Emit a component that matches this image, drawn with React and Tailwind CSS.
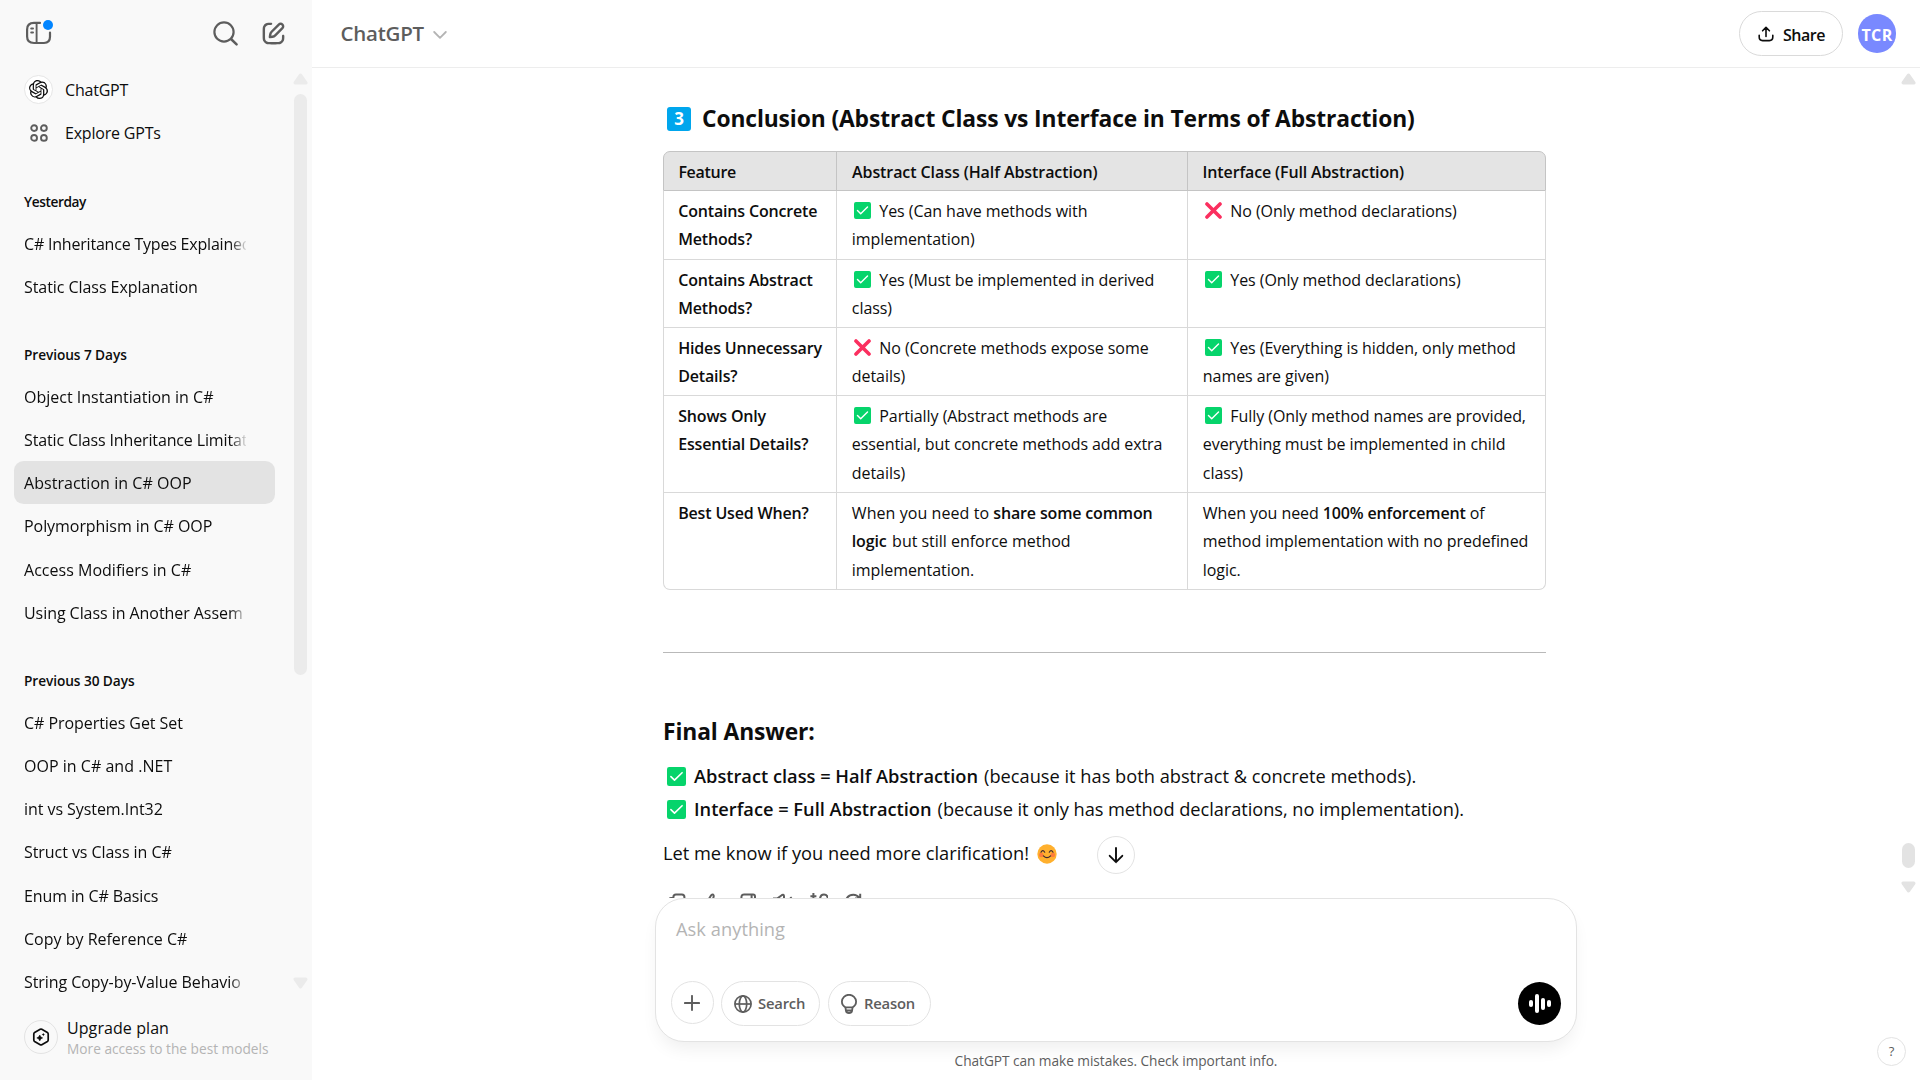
import React from "react";
import { SiOpenai } from "react-icons/si";

function Check({ className }) {
  return (
    <svg viewBox="0 0 19 19" className={className}>
      <rect width="19" height="19" rx="2.2" fill="#06d46b" />
      <path d="M3.9 9.6 7.5 13.1 15.1 5.7" fill="none" stroke="#fff" strokeWidth="1.6" strokeLinecap="round" strokeLinejoin="round" />
    </svg>
  );
}

function Cross({ className }) {
  return (
    <svg viewBox="0 0 19 19" className={className}>
      <path d="M2.2 2.2 16.8 16.8M16.8 2.2 2.2 16.8" fill="none" stroke="#fb2f5f" strokeWidth="4" strokeLinecap="round" />
    </svg>
  );
}

function Smile() {
  return (
    <svg viewBox="0 0 20 20" className="ml-[8px] h-5 w-5">
      <circle cx="10" cy="10" r="9.7" fill="#ffb02e" />
      <circle cx="4.2" cy="11" r="2.3" fill="#ff6f3d" opacity=".8" />
      <circle cx="15.8" cy="11" r="2.3" fill="#ff6f3d" opacity=".8" />
      <path d="M4 8.2Q5.8 5 7.7 8.2M12.3 8.2Q14.1 5 16 8.2M6.4 11.8Q10 15.4 13.6 11.8" fill="none" stroke="#402a32" strokeWidth="1.2" strokeLinecap="round" />
    </svg>
  );
}

function PanelIcon() {
  return (
    <div className="relative h-[29px] w-[29px]">
      <svg viewBox="0 0 29 29" className="h-[29px] w-[29px]" fill="none" stroke="#5d5d5d" strokeWidth="2.2" strokeLinecap="round">
        <path d="M16 3.9H10C5.5 3.9 3.1 5.8 3.1 10.5V17.5C3.1 22.2 5.5 24 10 24H20C24.2 24 26 22.2 26 17.8V13.5" />
        <path d="M12.6 4V24" strokeWidth="1.9" strokeLinecap="butt" />
        <path d="M7.2 9.4H9M7.2 13.6H9" strokeWidth="2" />
      </svg>
      <span className="absolute top-[1px] left-[19px] h-[10px] w-[10px] rounded-full bg-[#0285ff]" />
    </div>
  );
}

function SearchIcon() {
  return (
    <svg viewBox="0 0 29 29" className="h-[29px] w-[29px]" fill="none" stroke="#5d5d5d" strokeWidth="2.2" strokeLinecap="round">
      <circle cx="13" cy="13" r="9.6" />
      <path d="M20 20 25.6 25.4" strokeWidth="2.5" />
    </svg>
  );
}

function EditIcon() {
  return (
    <svg viewBox="0 0 24 24" className="h-[29px] w-[29px]" fill="#5d5d5d">
      <path d="M15.6729 3.91287C16.8918 2.69392 18.8682 2.69392 20.0871 3.91287C21.3061 5.13182 21.3061 7.10813 20.0871 8.32708L14.1499 14.2643C13.3849 15.0293 12.3925 15.5255 11.3215 15.6785L9.14142 15.9899C8.82983 16.0344 8.51546 15.9297 8.29289 15.7071C8.07033 15.4845 7.96554 15.1701 8.01005 14.8586L8.32149 12.6785C8.47449 11.6075 8.97072 10.615 9.7357 9.85006L15.6729 3.91287ZM18.6729 5.32708C18.235 4.88918 17.525 4.88918 17.0871 5.32708L11.1499 11.2643C10.6909 11.7233 10.3932 12.3187 10.3014 12.9613L10.1785 13.8215L11.0386 13.6986C11.6812 13.6068 12.2767 13.3091 12.7357 12.8501L18.6729 6.91287C19.1108 6.47497 19.1108 5.76499 18.6729 5.32708ZM11 3.99929C11.0004 4.55157 10.5531 4.99963 10.0008 5.00007C9.00227 5.00084 8.29769 5.00827 7.74651 5.06064C7.20685 5.11191 6.88488 5.20117 6.63803 5.32695C6.07354 5.61457 5.6146 6.07351 5.32698 6.63799C5.19279 6.90135 5.10062 7.24904 5.05118 7.8542C5.00078 8.47105 5 9.26336 5 10.4V13.6C5 14.7366 5.00078 15.5289 5.05118 16.1457C5.10062 16.7509 5.19279 17.0986 5.32698 17.3619C5.6146 17.9264 6.07354 18.3854 6.63803 18.673C6.90138 18.8072 7.24907 18.8993 7.85424 18.9488C8.47108 18.9992 9.26339 19 10.4 19H13.6C14.7366 19 15.5289 18.9992 16.1458 18.9488C16.7509 18.8993 17.0986 18.8072 17.362 18.673C17.9265 18.3854 18.3854 17.9264 18.673 17.3619C18.7988 17.1151 18.8881 16.7931 18.9393 16.2535C18.9917 15.7023 18.9991 14.9977 18.9999 13.9992C19.0003 13.4469 19.4484 12.9995 20.0007 13C20.553 13.0004 21.0003 13.4485 20.9999 14.0007C20.9991 14.9789 20.9932 15.7808 20.9304 16.4426C20.8664 17.116 20.7385 17.7136 20.455 18.2699C19.9757 19.2107 19.2108 19.9756 18.27 20.455C17.6777 20.7568 17.0375 20.8826 16.3086 20.9421C15.6008 21 14.7266 21 13.6428 21H10.3572C9.27339 21 8.39925 21 7.69138 20.9421C6.96253 20.8826 6.32234 20.7568 5.73005 20.455C4.78924 19.9756 4.02433 19.2107 3.54497 18.2699C3.24318 17.6776 3.11737 17.0374 3.05782 16.3086C2.99998 15.6007 2.99999 14.7266 3 13.6428V10.3572C2.99999 9.27337 2.99998 8.39922 3.05782 7.69134C3.11737 6.96249 3.24318 6.3223 3.54497 5.73001C4.02433 4.7892 4.78924 4.0243 5.73005 3.54493C6.28633 3.26149 6.88399 3.13358 7.55735 3.06961C8.21919 3.00673 9.02103 3.00083 9.99922 3.00007C10.5515 2.99964 10.9996 3.447 11 3.99929Z" />
    </svg>
  );
}

function GridIcon() {
  return (
    <svg viewBox="0 0 18 18" className="h-[18px] w-[18px]" fill="none" stroke="#5d5d5d" strokeWidth="1.9">
      <circle cx="4.1" cy="4.1" r="2.9" />
      <circle cx="13.9" cy="4.1" r="2.9" />
      <circle cx="4.1" cy="13.9" r="2.9" />
      <circle cx="13.9" cy="13.9" r="2.9" />
    </svg>
  );
}

function UpgradeIcon() {
  return (
    <svg viewBox="0 0 18 18" className="h-[18px] w-[18px]">
      <path d="M8.2 1.3Q9 .9 9.8 1.3L15.4 4.5Q16.2 5 16.2 5.9V12.1Q16.2 13 15.4 13.5L9.8 16.7Q9 17.1 8.2 16.7L2.6 13.5Q1.8 13 1.8 12.1V5.9Q1.8 5 2.6 4.5Z" fill="none" stroke="#0d0d0d" strokeWidth="1.7" />
      <path d="M7.8 7Q8.3 9.3 10.7 9.9Q8.3 10.5 7.8 12.9Q7.2 10.5 4.8 9.9Q7.2 9.3 7.8 7Z" fill="#0d0d0d" stroke="#0d0d0d" strokeWidth=".5" />
      <path d="M11.3 4.9Q11.6 6.3 13 6.6Q11.6 6.9 11.3 8.3Q11 6.9 9.6 6.6Q11 6.3 11.3 4.9Z" fill="#0d0d0d" />
    </svg>
  );
}

function Triangle({ down }) {
  return (
    <svg viewBox="0 0 15 12" className={down ? "h-3 w-[15px] rotate-180" : "h-3 w-[15px]"}>
      <path d="M7.5 2.2 12.8 9.8H2.2Z" fill="currentColor" stroke="currentColor" strokeWidth="3.4" strokeLinejoin="round" />
    </svg>
  );
}

const yesterday = [
  { t: "C# Inheritance Types Explained", ls: "tracking-[-0.2px]" },
  { t: "Static Class Explanation" },
];
const week = [
  { t: "Object Instantiation in C#", ls: "tracking-[0px]" },
  { t: "Static Class Inheritance Limitat", ls: "tracking-[-0.14px]" },
  { t: "Abstraction in C# OOP", active: true, ls: "tracking-[0.04px]" },
  { t: "Polymorphism in C# OOP" },
  { t: "Access Modifiers in C#", ls: "tracking-[0.02px]" },
  { t: "Using Class in Another Assem" },
];
const month = [
  { t: "C# Properties Get Set" },
  { t: "OOP in C# and .NET", ls: "tracking-[0.02px]" },
  { t: "int vs System.Int32" },
  { t: "Struct vs Class in C#" },
  { t: "Enum in C# Basics", ls: "tracking-[-0.11px]" },
  { t: "Copy by Reference C#", ls: "tracking-[0px]" },
  { t: "String Copy-by-Value Behavio" },
];

function Section({ title, items, tight }) {
  return (
    <div>
      <div className={`flex h-[66.8px] items-end pb-[9.4px] pl-[10px] text-[13.7px] leading-[20px] font-semibold ${tight ? "tracking-[-0.4px]" : "tracking-[-0.08px]"}`}>{title}</div>
      {items.map(({ t, active, ls = "" }) => (
        <div key={t} className={`flex h-[43.2px] items-center rounded-[9.6px] px-[10px] pt-[1.2px] ${active ? "bg-[#e3e3e3]" : ""}`}>
          <div className={`w-[222px] overflow-hidden whitespace-nowrap [mask-image:linear-gradient(to_right,black_206px,transparent_224px)] ${ls}`}>{t}</div>
        </div>
      ))}
    </div>
  );
}

function Sidebar() {
  return (
    <aside className="flex h-full w-[312px] shrink-0 flex-col bg-[#f9f9f9]">
      <div className="flex h-[68.4px] shrink-0 items-center justify-between pr-[24px] pb-[2px] pl-[24px]">
        <PanelIcon />
        <div className="flex gap-[19px]">
          <SearchIcon />
          <EditIcon />
        </div>
      </div>
      <div className="flex h-[935px] justify-between pr-1 pl-[14px]">
        <nav className="w-[261px] tracking-[-0.06px]">
          <div className="flex h-[43.2px] items-center pl-[10px]">
            <span className="flex h-[29px] w-[29px] items-center justify-center rounded-full border border-[#e6e6e6] bg-white">
              <SiOpenai className="h-[19px] w-[19px]" />
            </span>
            <span className="ml-[12px] tracking-[-0.2px]">ChatGPT</span>
          </div>
          <div className="flex h-[43.2px] items-center pl-[16px]">
            <GridIcon />
            <span className="ml-[17px] tracking-[-0.2px]">Explore GPTs</span>
          </div>
          <Section title="Yesterday" items={yesterday} tight />
          <Section title="Previous 7 Days" items={week} />
          <Section title="Previous 30 Days" items={month} />
        </nav>
        <div className="flex w-[15px] flex-col items-center pt-[5px] pb-[14px] text-[#ebebeb]">
          <Triangle />
          <div className="mt-[9px] mb-auto h-[581px] w-[13px] rounded-full bg-[#ebebeb]" />
          <Triangle down />
        </div>
      </div>
      <div className="flex items-start pt-[17px] pl-[24px]">
        <span className="flex h-[34px] w-[34px] items-center justify-center rounded-full border border-[#e3e3e3]">
          <UpgradeIcon />
        </span>
        <div className="ml-[9px] flex flex-col whitespace-nowrap">
          <span className="-mt-[3px] leading-[22px] tracking-[0.08px]">Upgrade plan</span>
          <span className="text-[13.7px] leading-[20px] text-[#b4b4b4]">More access to the best models</span>
        </div>
      </div>
    </aside>
  );
}

function Header() {
  return (
    <header className="flex h-[68px] shrink-0 items-center justify-between border-b border-[#ededed] pr-[24px] pl-[28px]">
      <div className="flex items-center">
        <span className="-mt-[2px] ml-[0.5px] text-[20.5px] leading-[30px] font-semibold tracking-[-0.25px] text-[#5d5d5d]">ChatGPT</span>
        <svg viewBox="0 0 14 8" className="mt-[2px] ml-[9px] h-2 w-[14px]" fill="none" stroke="#b4b4b4" strokeWidth="1.8" strokeLinecap="round" strokeLinejoin="round">
          <path d="M1.2 1 7 6.8 12.8 1" />
        </svg>
      </div>
      <div className="flex items-center">
        <div className="flex h-[45px] w-[104px] items-center rounded-full border border-[#dadada] pl-[18px]">
          <svg viewBox="0 0 16 16" className="h-4 w-4" fill="none" stroke="#0d0d0d" strokeWidth="1.6" strokeLinecap="round" strokeLinejoin="round">
            <path d="M1.2 9.2V11Q1.2 14.6 4.6 14.6H11.4Q14.8 14.6 14.8 11V9.2M8 10.4V1.6M4.6 4.8 8 1.4 11.4 4.8" />
          </svg>
          <span className="mt-[2px] ml-[9px] font-semibold tracking-[-0.5px]">Share</span>
        </div>
        <div className="ml-[15px] flex h-[39px] w-[38px] items-center justify-center rounded-full bg-[#7989ff] pt-[2px] font-bold tracking-[0.4px] text-white">TCR</div>
      </div>
    </header>
  );
}

const Y = ({ children }) => <><Check className="mr-[8px] ml-[2.5px] inline-block h-[17px] w-[17px] align-[-2px]" />{children}</>;
const N = ({ children }) => <><Cross className="mr-[8px] ml-[2.5px] inline-block h-[17px] w-[17px] align-[-2px]" />{children}</>;
const B = ({ children }) => <b className="font-semibold tracking-[-0.16px]">{children}</b>;

const rows = [
  { h: "h-[68px]", c: [["Contains Concrete", "Methods?"], [<Y>Yes (Can have methods with</Y>, "implementation)"], [<N>No (Only method declarations)</N>]] },
  { h: "h-[68px]", c: [["Contains Abstract", "Methods?"], [<Y>Yes (Must be implemented in derived</Y>, "class)"], [<Y>Yes (Only method declarations)</Y>]] },
  { h: "h-[68px]", c: [["Hides Unnecessary", "Details?"], [<N>No (Concrete methods expose some</N>, "details)"], [<Y>Yes (Everything is hidden, only method</Y>, "names are given)"]] },
  { h: "h-[97px]", c: [["Shows Only", "Essential Details?"], [<Y>Partially (Abstract methods are</Y>, <span className="tracking-[-0.09px]">essential, but concrete methods add extra</span>, "details)"], [<Y>Fully (Only method names are provided,</Y>, "everything must be implemented in child", "class)"]] },
  { h: "h-[97px]", c: [["Best Used When?"], [<span className="tracking-[0.07px]">When you need to <B>share some common</B></span>, <><B>logic</B> <span className="ml-[1.5px] tracking-[-0.02px]">but still enforce method</span></>, "implementation."], [<>When you need <B>100% enforcement</B> of</>, "method implementation with no predefined", "logic."]] },
];

function Table() {
  return (
    <div className="mt-[13px] w-[883px] whitespace-nowrap">
      <div className="grid h-[40px] grid-cols-[173px_351px_357px] rounded-t-[7px] border border-[#c4c4c4] bg-[#e4e4e4] font-semibold tracking-[-0.14px]">
        <div className="flex items-center border-r border-[#c4c4c4] pt-[2px] pl-[14.4px] tracking-[-0.3px]">Feature</div>
        <div className="flex items-center border-r border-[#c4c4c4] pt-[2px] pl-[15px] tracking-[-0.08px]">Abstract Class (Half Abstraction)</div>
        <div className="flex items-center pt-[2px] pl-[14.6px]">Interface (Full Abstraction)</div>
      </div>
      <div className="overflow-hidden rounded-b-[7px] border border-t-0 border-[#d9d9d9]">
        {rows.map((r, i) => (
          <div key={i} className={`grid grid-cols-[173px_351px_357px] ${r.h} ${i ? "border-t border-[#d9d9d9]" : ""}`}>
            {r.c.map((lines, j) => (
              <div key={j} className={`leading-[28.5px] ${i ? "pt-[5.5px]" : "pt-[5.9px]"} ${j < 2 ? "border-r border-[#d9d9d9]" : ""} ${j === 0 ? "pl-[14.2px] font-semibold tracking-[-0.17px]" : "pl-[14.8px] tracking-[-0.06px]"}`}>
                {lines.map((l, k) => <div key={k} className="h-[28.5px]">{l}</div>)}
              </div>
            ))}
          </div>
        ))}
      </div>
    </div>
  );
}

function Actions() {
  return (
    <div className="mt-[20.5px] flex gap-[15px] pl-[5px]">
      <svg viewBox="0 0 20 20" className="h-5 w-5" fill="none" stroke="#5d5d5d" strokeWidth="2"><rect x="5.4" y="3.4" width="11" height="11" rx="2.5" /><path d="M5 7H3Q1.4 7 1.4 9V16Q1.4 18.4 4 18.4H10Q12 18.4 12.4 15" /></svg>
      <svg viewBox="0 0 20 20" className="h-5 w-5" fill="none" stroke="#5d5d5d" strokeWidth="2"><path d="M5 9.5 8 4.4Q8.8 3 10.2 3.6Q11 4.4 10.6 5.8L10 8.2H15Q17.4 8.4 17 10.8L16 16.4H5ZM5 9.5H2V16.4H5" /></svg>
      <svg viewBox="0 0 20 20" className="h-5 w-5" fill="none" stroke="#5d5d5d" strokeWidth="2"><path d="M13.6 3.4V12L10.4 17.6L8.5 16.8L9 13H5Q2.6 12.6 3 10L3.6 5Q4 3.4 6 3.4H15.1Q17 3.4 17 5.4V12H14" /></svg>
      <svg viewBox="0 0 20 20" className="h-5 w-5" fill="none" stroke="#5d5d5d" strokeWidth="2"><path d="M1 7.4H4.5L9 4Q11 3 11 5.4V15Q11 17 9 16.5L4.5 12.5H1ZM17.4 6Q20.6 10 17.4 14" /></svg>
      <svg viewBox="0 0 20 20" className="h-5 w-5" fill="none" stroke="#5d5d5d" strokeWidth="2"><path d="M5.4 2V9M2.4 5.2H8.4M12 7.6Q12.6 3.6 16 3.6Q19.4 3.6 20 7.6L8 17Z" /></svg>
      <svg viewBox="0 0 20 20" className="h-5 w-5" fill="none" stroke="#5d5d5d" strokeWidth="2"><path d="M3.4 8Q5.6 3.8 10.4 3.8Q14 3.8 16.4 7M17.2 2.8V7.6H12" /></svg>
    </div>
  );
}

function Conversation() {
  return (
    <div className="relative flex h-[830px] shrink-0 justify-between overflow-hidden">
      <div className="ml-[351px] w-[883px] pt-[31px] whitespace-nowrap">
        <h3 className="flex h-[39px] items-center text-[22.8px] font-bold tracking-[-0.11px]">
          <span className="mr-[11px] ml-[4px] flex h-6 w-6 items-center justify-center rounded-[3px] bg-[#00a6ed] text-[17px] leading-none text-white">3</span>
          <span className="pt-[2px]">Conclusion (Abstract Class vs Interface in Terms of Abstraction)</span>
        </h3>
        <Table />
        <div className="mt-[62px] h-px bg-[#b9b9b9]" />
        <h3 className="mt-[60px] flex h-[38px] items-center text-[22.8px] font-bold tracking-[-0.1px]">Final Answer:</h3>
        <div className="mt-[9px] flex h-[33px] items-center text-[18.24px]">
          <Check className="-mt-[1px] mr-[8.5px] ml-[3.5px] h-[19px] w-[19px]" />
          <b className="mr-[6px] font-semibold">Abstract class = Half Abstraction</b>
          (because it has both abstract &amp; concrete methods).
        </div>
        <div className="flex h-[33px] items-center text-[18.24px]">
          <Check className="-mt-[1px] mr-[8.5px] ml-[3.5px] h-[19px] w-[19px]" />
          <b className="mr-[6px] font-semibold">Interface = Full Abstraction</b>
          <span className="tracking-[-0.06px]">(because it only has method declarations, no implementation).</span>
        </div>
        <div className="mt-[11px] flex h-[33px] items-center text-[18.24px]">
          Let me know if you need more clarification!
          <Smile />
        </div>
        <Actions />
      </div>
      <div className="mr-1 flex w-[15px] flex-col items-center pt-[5px] pb-[5px] text-[#e3e3e3]">
        <Triangle />
        <div className="mt-auto mb-[13px] h-[25px] w-[13px] rounded-full bg-[#e3e3e3]" />
        <Triangle down />
      </div>
      <button className="absolute bottom-[24px] left-[785px] flex h-[38px] w-[38px] items-center justify-center rounded-full border border-[#e3e3e3] bg-white">
        <svg viewBox="0 0 16 18" className="h-[18px] w-4" fill="none" stroke="#0d0d0d" strokeWidth="1.9" strokeLinecap="round" strokeLinejoin="round">
          <path d="M8 2V16M1.7 9.8 8 16.2 14.3 9.8" />
        </svg>
      </button>
    </div>
  );
}

function Composer() {
  return (
    <div className="ml-[343px] flex h-[144px] w-[922px] shrink-0 flex-col justify-between rounded-[29px] border border-[#e3e3e3] bg-white pt-[16px] pr-[15px] pb-[15px] pl-[15px] shadow-[0_10px_18px_-4px_rgba(0,0,0,0.07)]">
      <div className="pl-[5px] text-[18.24px] leading-[28px] tracking-[0.06px] text-[#b4b4b4]">Ask anything</div>
      <div className="flex h-[45px] items-start text-[14.8px] font-semibold tracking-[-0.2px] text-[#5d5d5d]">
        <div className="flex h-[43px] w-[43px] items-center justify-center rounded-full border border-[#e3e3e3]">
          <svg viewBox="0 0 16 16" className="mr-[2px] h-4 w-4" stroke="#5d5d5d" strokeWidth="1.9" strokeLinecap="round">
            <path d="M8 .9V15.1M.9 8H15.1" />
          </svg>
        </div>
        <div className="ml-[7px] flex h-[45px] w-[99px] items-center rounded-full border border-[#e3e3e3] pl-[12px]">
          <svg viewBox="0 0 18 18" className="h-[18px] w-[18px]" fill="none" stroke="#5d5d5d" strokeWidth="1.7">
            <circle cx="9" cy="9" r="8.1" />
            <ellipse cx="9" cy="9" rx="3.7" ry="8.1" />
            <path d="M1 9H17" />
          </svg>
          <span className="ml-[6px]">Search</span>
        </div>
        <div className="ml-[8px] flex h-[45px] w-[103px] items-center rounded-full border border-[#e3e3e3] pl-[12px]">
          <svg viewBox="0 0 16 20" className="h-5 w-4" fill="none" stroke="#5d5d5d" strokeWidth="1.8" strokeLinejoin="round">
            <path d="M4.4 13.4Q.9 11.4.9 7.6A7.1 6.8 0 0 1 15.1 7.6Q15.1 11.4 11.6 13.4L11 17Q10.6 19 8 19T5 17ZM4.4 13.4H11.6M5 16.5H11" />
          </svg>
          <span className="ml-[7px]">Reason</span>
        </div>
        <div className="mt-[1px] ml-auto flex h-[43px] w-[43px] items-center justify-center gap-[2px] rounded-full bg-black">
          <span className="h-[7px] w-1 rounded-full bg-white" />
          <span className="h-[19px] w-1 rounded-full bg-white" />
          <span className="h-[12px] w-1 rounded-full bg-white" />
          <span className="h-[7px] w-1 rounded-full bg-white" />
        </div>
      </div>
    </div>
  );
}

export default function App() {
  return (
    <div className="flex h-[1080px] w-[1920px] overflow-hidden bg-white font-['Open_Sans',sans-serif] text-[16px] text-[#0d0d0d]">
      <Sidebar />
      <main className="relative flex flex-1 flex-col">
        <Header />
        <Conversation />
        <Composer />
        <div className="ml-[343px] flex h-[38px] w-[922px] items-center justify-center pt-[1px] text-[13.7px] tracking-[-0.05px] text-[#5d5d5d]">
          ChatGPT can make mistakes. Check important info.
        </div>
        <button className="absolute right-[14px] bottom-[14px] flex h-[29px] w-[29px] items-center justify-center rounded-full border border-[#e3e3e3] text-[13px] text-[#5d5d5d]">?</button>
      </main>
    </div>
  );
}
